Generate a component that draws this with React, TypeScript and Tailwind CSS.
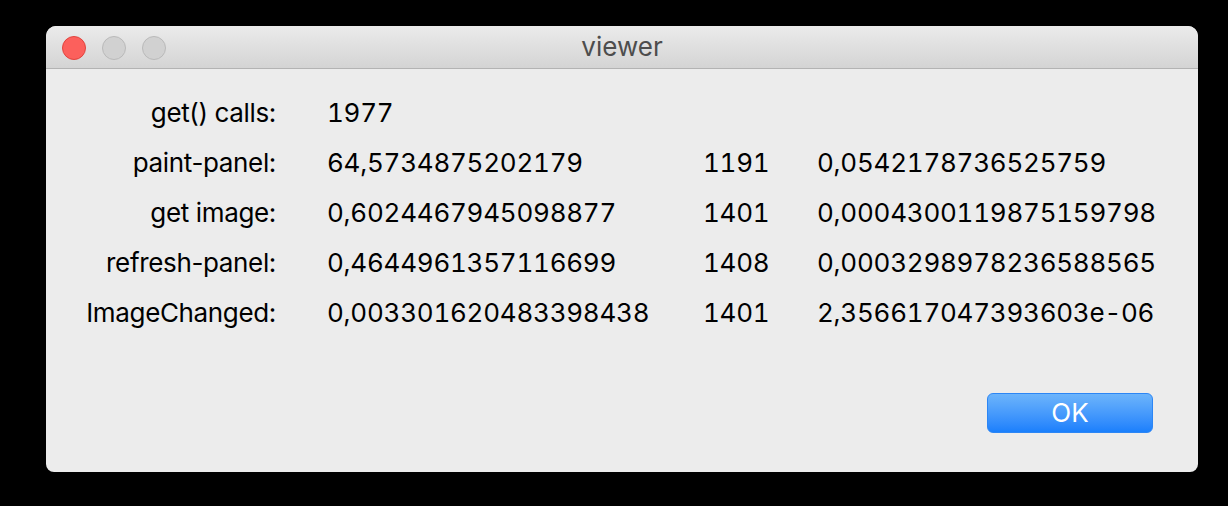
const rows = [
  { label: "get() calls:", value: "1977", count: "", avg: "" },
  { label: "paint-panel:", value: "64,5734875202179", count: "1191", avg: "0,0542178736525759" },
  { label: "get image:", value: "0,6024467945098877", count: "1401", avg: "0,0004300119875159798" },
  { label: "refresh-panel:", value: "0,4644961357116699", count: "1408", avg: "0,0003298978236588565" },
  { label: "ImageChanged:", value: "0,003301620483398438", count: "1401", avg: "2,356617047393603e-06" },
];

export default function App() {
  return (
    <div className="w-[1228px] h-[506px] bg-black pt-[26px] pl-[46px] font-['Inter',sans-serif]">
      <div className="w-[1152px] h-[446px] bg-[#ececec] rounded-t-[10px] rounded-b-[8px] overflow-hidden flex flex-col">
        {/* title bar */}
        <div className="relative h-[43px] shrink-0 bg-gradient-to-b from-[#ebebeb] to-[#d4d4d4] border-b border-[#b3b3b3] flex items-center justify-center">
          <div className="absolute left-[16px] top-[10px] flex gap-[16px]">
            <div className="w-[24px] h-[24px] rounded-full bg-[#fc605c] border border-[#e0443e]" />
            <div className="w-[24px] h-[24px] rounded-full bg-[#d1d1d1] border border-[#b9b9b9]" />
            <div className="w-[24px] h-[24px] rounded-full bg-[#d1d1d1] border border-[#b9b9b9]" />
          </div>
          <div className="text-[26px] text-[#4d4d4d] leading-none">viewer</div>
        </div>

        {/* stats */}
        <div className="pt-[19px] flex flex-col">
          {rows.map((r, i) => (
            <div key={i} className="flex h-[50px] items-center text-[26px] text-black leading-[50px]">
              <div className="w-[230px] text-right tracking-[-0.35px]">{r.label}</div>
              <div className="w-[51px]" />
              <div className="w-[376px] tabular-nums tracking-[-0.25px]">{r.value}</div>
              <div className="w-[114px] tabular-nums tracking-[-0.25px]">{r.count}</div>
              <div className="tabular-nums tracking-[-0.25px]">{r.avg}</div>
            </div>
          ))}
        </div>

        <div className="flex justify-end pr-[45px] mt-[55px]">
          <button className="w-[166px] h-[40px] rounded-[6px] bg-gradient-to-b from-[#6cb4fb] to-[#1a7ffc] border border-[#2c86f5] text-white text-[26px] leading-none">
            OK
          </button>
        </div>
      </div>
    </div>
  );
}
